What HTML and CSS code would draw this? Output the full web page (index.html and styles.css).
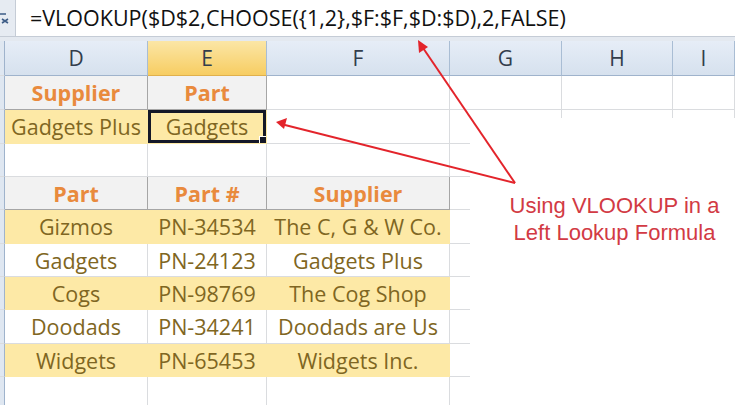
FILE: index.html
```html
<!DOCTYPE html>
<html lang="en">
<head>
    <meta charset="UTF-8">
    <title>Left Lookup with VLOOKUP</title>
    <link rel="stylesheet" href="styles.css">
</head>
<body>
    <div class="window">
        <div class="formula-bar">
            <div class="fx-btn">
                <svg width="15" height="36" viewBox="0 0 15 36">
                    <path d="M0 14 L6 14 M2 19 L8 23 M8 19 L2 23" stroke="#3d5c86" stroke-width="1.6" fill="none"/>
                </svg>
            </div>
            <div class="formula">=VLOOKUP($D$2,CHOOSE({1,2},$F:$F,$D:$D),2,FALSE)</div>
        </div>
        <div class="bar-gap"></div>

        <div class="sheet">
            <!-- column headers -->
            <div class="cell corner"></div>
            <div class="cell hdr">D</div>
            <div class="cell hdr active">E</div>
            <div class="cell hdr">F</div>
            <div class="cell hdr">G</div>
            <div class="cell hdr">H</div>
            <div class="cell hdr">I</div>

            <!-- row 1 -->
            <div class="cell rowhdr"></div>
            <div class="cell th">Supplier</div>
            <div class="cell th">Part</div>
            <div class="cell"></div>
            <div class="cell"></div>
            <div class="cell"></div>
            <div class="cell"></div>

            <!-- row 2 -->
            <div class="cell rowhdr"></div>
            <div class="cell hl">Gadgets Plus</div>
            <div class="cell hl sel">Gadgets<span class="handle"></span></div>
            <div class="cell"></div>
            <div class="cell"></div>
            <div class="cell"></div>
            <div class="cell"></div>

            <!-- row 3 -->
            <div class="cell rowhdr"></div>
            <div class="cell"></div>
            <div class="cell"></div>
            <div class="cell"></div>
            <div class="cell"></div>
            <div class="cell"></div>
            <div class="cell"></div>

            <!-- row 4: lookup table header -->
            <div class="cell rowhdr"></div>
            <div class="cell th">Part</div>
            <div class="cell th">Part #</div>
            <div class="cell th">Supplier</div>
            <div class="cell"></div>
            <div class="cell"></div>
            <div class="cell"></div>

            <div class="cell rowhdr"></div>
            <div class="cell hl">Gizmos</div>
            <div class="cell hl">PN-34534</div>
            <div class="cell hl">The C, G &amp; W Co.</div>
            <div class="cell"></div>
            <div class="cell"></div>
            <div class="cell"></div>

            <div class="cell rowhdr"></div>
            <div class="cell">Gadgets</div>
            <div class="cell">PN-24123</div>
            <div class="cell">Gadgets Plus</div>
            <div class="cell"></div>
            <div class="cell"></div>
            <div class="cell"></div>

            <div class="cell rowhdr"></div>
            <div class="cell hl">Cogs</div>
            <div class="cell hl">PN-98769</div>
            <div class="cell hl">The Cog Shop</div>
            <div class="cell"></div>
            <div class="cell"></div>
            <div class="cell"></div>

            <div class="cell rowhdr"></div>
            <div class="cell">Doodads</div>
            <div class="cell">PN-34241</div>
            <div class="cell">Doodads are Us</div>
            <div class="cell"></div>
            <div class="cell"></div>
            <div class="cell"></div>

            <div class="cell rowhdr"></div>
            <div class="cell hl">Widgets</div>
            <div class="cell hl">PN-65453</div>
            <div class="cell hl">Widgets Inc.</div>
            <div class="cell"></div>
            <div class="cell"></div>
            <div class="cell"></div>

            <div class="cell rowhdr"></div>
            <div class="cell"></div>
            <div class="cell"></div>
            <div class="cell"></div>
            <div class="cell"></div>
            <div class="cell"></div>
            <div class="cell"></div>
        </div>

        <!-- callout text box and arrows drawn over the sheet -->
        <div class="callout">Using VLOOKUP in a<br>Left Lookup Formula</div>
        <svg class="arrows" width="735" height="405" viewBox="0 0 735 405">
            <g stroke="#e3242b" stroke-width="2" fill="none">
                <line x1="515" y1="183" x2="421" y2="45"/>
                <line x1="515" y1="183" x2="281" y2="124"/>
            </g>
            <g fill="#e3242b">
                <polygon points="418,40 419,53 428,47"/>
                <polygon points="276,122 287,118 284,129"/>
            </g>
        </svg>
    </div>
</body>
</html>
```

FILE: styles.css
```css
body {
    margin: 0;
    background: #fff;
    font-family: "Open Sans", sans-serif;
}
.window {
    position: relative;
    width: 735px;
    height: 405px;
    overflow: hidden;
}
.formula-bar {
    display: flex;
    height: 36px;
    border-bottom: 1px solid #c5ccd6;
}
.fx-btn {
    width: 15px;
    background: #e6ebf2;
    border-right: 1px solid #c5ccd6;
}
.formula {
    padding-left: 14px;
    font-size: 21.5px;
    line-height: 36px;
    color: #111;
    white-space: nowrap;
}
.bar-gap {
    height: 4px;
    background: #e4e9f0;
}
.sheet {
    display: grid;
    grid-template-columns: 5px 143px 119px 183px 112px 111px 1fr;
    grid-template-rows: 35px 34px 34px 33px 33px 34px 33px 33px 34px 33px 40px;
}
.cell {
    display: flex;
    align-items: center;
    justify-content: center;
    border-right: 1px solid #dadcdf;
    border-bottom: 1px solid #dadcdf;
    font-size: 21.5px;
    color: #7f6622;
    white-space: nowrap;
    overflow: hidden;
}
.corner, .rowhdr {
    background: #dfe7f1;
    border-right: 1px solid #9fb3cc;
}
.hdr {
    background: linear-gradient(#e6edf7, #d6e1ee);
    border-right: 1px solid #a9bdd4;
    border-bottom: 1px solid #9fb3cc;
    color: #333d4c;
    font-size: 21px;
}
.hdr.active {
    background: linear-gradient(#fbe6a6, #f7cd62);
    border-bottom-color: #e0b04c;
}
.th {
    background: #f2f2f2;
    border-right: 1px solid #a6a6a6;
    border-bottom: 1px solid #a6a6a6;
    color: #e98a3d;
    font-weight: bold;
}
.hl {
    background: #fde9a6;
    border-right-color: #fde9a6;
    border-bottom-color: #fde9a6;
}
.sel {
    position: relative;
    box-shadow: inset 0 0 0 3px #141828;
}
.handle {
    position: absolute;
    right: -1px;
    bottom: -1px;
    width: 6px;
    height: 6px;
    background: #141828;
    border: 1px solid #fff;
}
.callout {
    position: absolute;
    left: 470px;
    top: 118px;
    right: 0;
    bottom: 0;
    background: #fff;
    padding: 74px 0 0 24px;
    text-align: center;
    font-family: "Liberation Sans", sans-serif;
    font-size: 22px;
    line-height: 27px;
    color: #d23a44;
}
.arrows {
    position: absolute;
    left: 0;
    top: 0;
    pointer-events: none;
}
```
